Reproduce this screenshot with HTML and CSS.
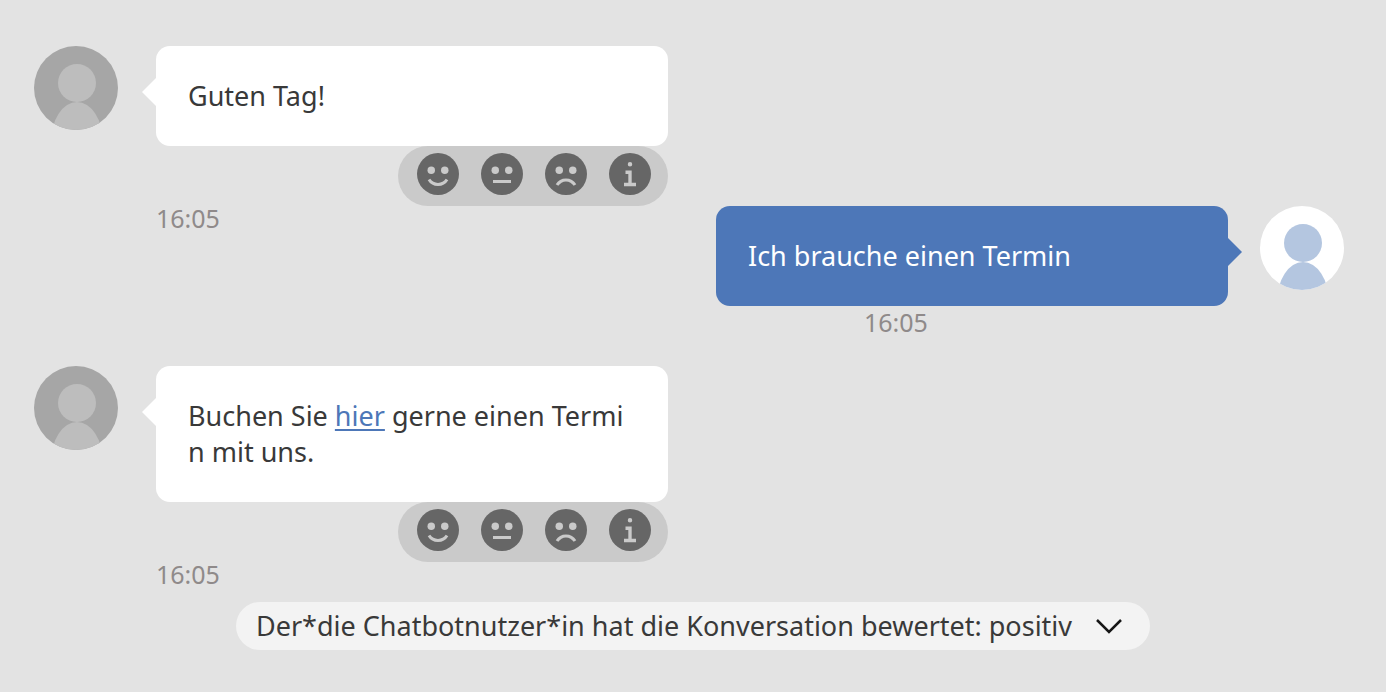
FILE: index.html
```
<!DOCTYPE html>
<html lang="de">
<head>
    <meta charset="UTF-8">
    <meta name="viewport" content="width=device-width, initial-scale=1.0">
    <title>Chatverlauf</title>
    <link rel="stylesheet" href="styles.css">
</head>
<body>
    <!-- Shared icons -->
    <svg class="sprite" aria-hidden="true">
        <symbol id="avatar" viewBox="0 0 84 84">
            <circle cx="43" cy="37" r="19"/>
            <ellipse cx="43" cy="96" rx="26" ry="40"/>
        </symbol>
        <symbol id="face-good" viewBox="0 0 32 32">
            <circle cx="16" cy="16" r="14"/>
            <g class="cut">
                <circle cx="11.5" cy="13.5" r="2.5"/>
                <circle cx="20.5" cy="13.5" r="2.5"/>
                <path d="M16,24a8,8,0,0,1-6.85-3.89l1.71-1a6,6,0,0,0,10.28,0l1.71,1A8,8,0,0,1,16,24Z"/>
            </g>
        </symbol>
        <symbol id="face-neutral" viewBox="0 0 32 32">
            <circle cx="16" cy="16" r="14"/>
            <g class="cut">
                <circle cx="11.5" cy="13.5" r="2.5"/>
                <circle cx="20.5" cy="13.5" r="2.5"/>
                <rect x="10" y="20" width="12" height="2"/>
            </g>
        </symbol>
        <symbol id="face-bad" viewBox="0 0 32 32">
            <circle cx="16" cy="16" r="14"/>
            <g class="cut">
                <circle cx="11.5" cy="13.5" r="2.5"/>
                <circle cx="20.5" cy="13.5" r="2.5"/>
                <path d="M16,19a8,8,0,0,0-6.85,3.89l1.71,1a6,6,0,0,1,10.28,0l1.71-1A8,8,0,0,0,16,19Z"/>
            </g>
        </symbol>
        <symbol id="info" viewBox="0 0 32 32">
            <circle cx="16" cy="16" r="14"/>
            <path class="cut" d="M16,8a1.5,1.5,0,1,1-1.5,1.5A1.5,1.5,0,0,1,16,8Zm4,16.100H12v-2.250h2.875v-5.900H13v-2.250h4.125v8.150H20Z"/>
        </symbol>
    </svg>

    <main class="chat">
        <div class="message bot">
            <svg class="avatar"><use href="#avatar"/></svg>
            <div class="content">
                <p class="bubble">Guten Tag!</p>
                <div class="reactions">
                    <button type="button" aria-label="Gut"><svg><use href="#face-good"/></svg></button>
                    <button type="button" aria-label="Neutral"><svg><use href="#face-neutral"/></svg></button>
                    <button type="button" aria-label="Schlecht"><svg><use href="#face-bad"/></svg></button>
                    <button type="button" aria-label="Info"><svg><use href="#info"/></svg></button>
                </div>
                <time class="time">16:05</time>
            </div>
        </div>

        <div class="message user">
            <div class="content">
                <p class="bubble">Ich brauche einen Termin</p>
                <time class="time">16:05</time>
            </div>
            <svg class="avatar"><use href="#avatar"/></svg>
        </div>

        <div class="message bot">
            <svg class="avatar"><use href="#avatar"/></svg>
            <div class="content">
                <p class="bubble">Buchen Sie <a href="#">hier</a> gerne einen Termin mit uns.</p>
                <div class="reactions">
                    <button type="button" aria-label="Gut"><svg><use href="#face-good"/></svg></button>
                    <button type="button" aria-label="Neutral"><svg><use href="#face-neutral"/></svg></button>
                    <button type="button" aria-label="Schlecht"><svg><use href="#face-bad"/></svg></button>
                    <button type="button" aria-label="Info"><svg><use href="#info"/></svg></button>
                </div>
                <time class="time">16:05</time>
            </div>
        </div>

        <button type="button" class="rating">
            <span>Der*die Chatbotnutzer*in hat die Konversation bewertet: positiv</span>
            <svg class="chevron" viewBox="0 0 26 16"><path d="M1 2 13 14 25 2"/></svg>
        </button>
    </main>
</body>
</html>
```

FILE: styles.css
```
* {
    box-sizing: border-box;
}
body {
    margin: 0;
    background: #e3e3e3;
    color: #393939;
    font-family: "Noto Sans", sans-serif;
    font-size: 27px;
    line-height: 36px;
}
.sprite {
    display: none;
}
.chat {
    display: flex;
    flex-direction: column;
    padding: 46px 34px 42px;
}
.message {
    display: flex;
    align-items: flex-start;
}
.bot {
    gap: 38px;
}
.user {
    gap: 32px;
    align-self: flex-end;
    /* starts beside the time of the message before it */
    margin: -40px 8px 20px 0;
}
.content {
    display: flex;
    flex-direction: column;
    width: 512px;
}
.avatar {
    flex: none;
    width: 84px;
    height: 84px;
    border-radius: 50%;
    background: #a6a6a6;
    fill: #bdbdbd;
}
.user .avatar {
    background: #fff;
    fill: #b4c6e0;
}
.bubble {
    position: relative;
    margin: 0;
    padding: 32px;
    border-radius: 14px;
    background: #fff;
    word-break: break-all;
}
.bubble::before {
    content: "";
    position: absolute;
    top: 32px;
    right: 100%;
    border: 14px solid transparent;
    border-left-width: 0;
    border-right-color: #fff;
}
.bubble a {
    color: #4d77b8;
    text-decoration-thickness: 2px;
    text-underline-offset: 3px;
}
.user .bubble {
    background: #4d77b8;
    color: #fff;
}
.user .bubble::before {
    right: auto;
    left: 100%;
    border-width: 14px 0 14px 14px;
    border-left-color: #4d77b8;
}
.reactions {
    display: flex;
    gap: 16px;
    align-self: flex-end;
    height: 60px;
    padding: 4px 14px 8px 16px;
    border-radius: 30px;
    background: #cacaca;
}
.reactions button {
    width: 48px;
    height: 48px;
    padding: 0;
    border: 0;
    background: none;
    cursor: pointer;
}
.reactions svg {
    display: block;
    width: 48px;
    height: 48px;
    fill: #666;
}
.cut {
    fill: #cacaca;
}
.time {
    height: 40px;
    color: #8f8a8a;
    font-size: 25px;
    line-height: 24px;
}
.user .time {
    margin-left: 148px;
    line-height: 32px;
}
.rating {
    display: flex;
    align-items: center;
    gap: 24px;
    align-self: center;
    padding: 6px 28px 6px 20px;
    border: 0;
    border-radius: 24px;
    background: #f3f3f3;
    color: inherit;
    font: inherit;
    cursor: pointer;
}
.chevron {
    width: 26px;
    height: 16px;
    fill: none;
    stroke: #161616;
    stroke-width: 2.5;
}
```
